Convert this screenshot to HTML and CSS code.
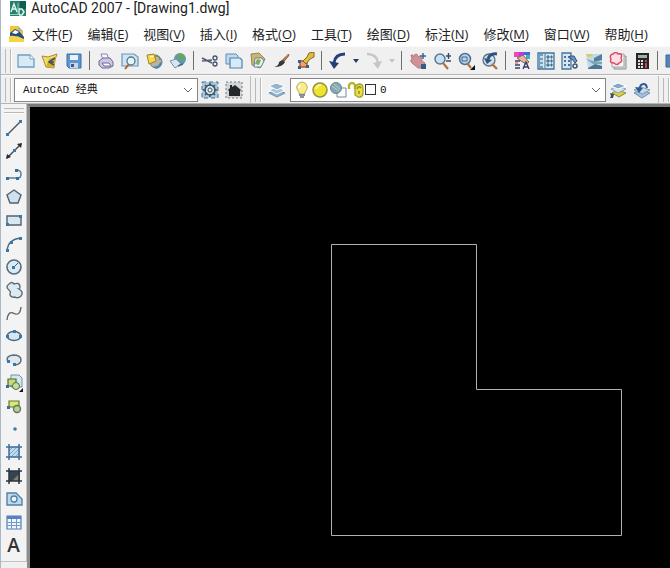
FILE: index.html
```html
<!DOCTYPE html>
<html lang="zh-CN">
<head>
    <meta charset="UTF-8">
    <meta name="viewport" content="width=device-width, initial-scale=1.0">
    <title>AutoCAD 2007 - [Drawing1.dwg]</title>
    <link rel="stylesheet" href="styles.css">
</head>
<body>
    <div class="app">
        <header class="titlebar">
            <svg class="logo" viewBox="0 0 16 16"><path fill="#27806c" d="M0 0h16v15H0z"/><path fill="#0f5f50" d="M10 0h6v8h-6z"/><path fill="none" stroke="#e4f5ef" stroke-width="1.4" d="M1 11L4 3l3 8M2 8h4M9 14V8h3l2 3-2 3H9"/><path stroke="#8bd0bd" d="M0 13.500h8M8 2v12"/></svg>
            <span>AutoCAD 2007 - [Drawing1.dwg]</span>
        </header>

        <nav class="menubar">
            <svg class="doc-icon" viewBox="0 0 18 18"><path fill="#f4c62f" d="M2 1h8l5 5v7H2z"/><path fill="#a9b3bb" d="M10 1v5h5z"/><path fill="#1e4d87" d="M2 11V8l5-4 4 2 5 6v3H2z"/><path fill="#fff" d="M4 8l3-3 4 2-3 2z"/><path fill="#f7d34a" d="M1 11q8-1 15 3v3H1z"/></svg>
            <button class="menu">文件(<u>F</u>)</button>
            <button class="menu">编辑(<u>E</u>)</button>
            <button class="menu">视图(<u>V</u>)</button>
            <button class="menu">插入(<u>I</u>)</button>
            <button class="menu">格式(<u>O</u>)</button>
            <button class="menu">工具(<u>T</u>)</button>
            <button class="menu">绘图(<u>D</u>)</button>
            <button class="menu">标注(<u>N</u>)</button>
            <button class="menu">修改(<u>M</u>)</button>
            <button class="menu">窗口(<u>W</u>)</button>
            <button class="menu">帮助(<u>H</u>)</button>
        </nav>

        <!-- Standard toolbar -->
        <div class="toolbar">
            <span class="grip"></span>
            <button class="tool" aria-label="新建"><svg viewBox="0 0 18 18"><path fill="#d7ebf6" stroke="#6f9fc2" stroke-width="1.300" d="M1 3h12l4 4v8H1z"/><path fill="#fff" stroke="#6f9fc2" d="M13 3v4h4"/></svg></button>
            <button class="tool" aria-label="打开"><svg viewBox="0 0 18 18"><path fill="#f2dc62" stroke="#a98f2d" d="M1 4l6 1 9-3-2 6-1 8-8-1z"/><path fill="#d2ae35" d="M5 15l3-8 7-2-2 11z"/><path fill="none" stroke="#46535c" stroke-width="1.600" d="M14 6l-6 4 5 3M8 10h5"/></svg></button>
            <button class="tool" aria-label="保存"><svg viewBox="0 0 18 18"><path fill="#5d95cf" stroke="#3b6ca5" d="M2 2h14v14H4l-2-2z"/><path fill="#e9f2fa" d="M5 3h8v5H5z"/><path fill="#c9d8e6" d="M5 11h8v5H5z"/><path fill="#355d91" d="M6 12h3v3H6z"/></svg></button>
            <span class="divider"></span>
            <button class="tool" aria-label="打印"><svg viewBox="0 0 18 18"><path fill="#f4f4fb" stroke="#8a86b4" d="M4 2h6l2 6H6z"/><path fill="#cbc9e2" stroke="#6a6795" d="M2 9l4-3h7l3 4v4l-4 2H5l-3-3z"/><path fill="#fff" stroke="#6a6795" d="M5 11h7l2 3H7z"/></svg></button>
            <button class="tool" aria-label="打印预览"><svg viewBox="0 0 18 18"><path fill="#cfe5f4" stroke="#6a96bb" stroke-width="1.200" d="M1 2h12l4 3v9H1z"/><circle cx="10" cy="9" r="4" fill="#e7f4fb" stroke="#55768f" stroke-width="1.300"/><path stroke="#a7622d" stroke-width="2" d="M8 12l-4 5"/></svg></button>
            <button class="tool" aria-label="发布"><svg viewBox="0 0 18 18"><circle cx="11" cy="10" r="6" fill="#b7b49d" stroke="#67747c"/><path fill="#4b87b5" d="M9 14q5 1 6-4l2 1q-1 5-6 6z"/><path fill="#f5d94a" stroke="#a1802e" d="M2 3l7-1 2 7-7 3z"/><path stroke="#fff" d="M5 5l4-1"/><path fill="none" stroke="#577a3d" d="M10 3q5 0 5 5"/></svg></button>
            <button class="tool" aria-label="三维 DWF"><svg viewBox="0 0 18 18"><circle cx="11" cy="7" r="6" fill="#5d9aac"/><path fill="#6aa557" d="M8 2q6-1 8 4l-4 2-3-2z"/><path fill="#d9e4ef" stroke="#7590aa" d="M1 9l6-2 5 5-6 4z"/><path fill="none" stroke="#43698c" stroke-width="1.500" d="M9 14l5-2"/></svg></button>
            <span class="divider"></span>
            <button class="tool" aria-label="剪切"><svg viewBox="0 0 18 18"><path fill="none" stroke="#4e5870" stroke-width="1.500" d="M1 6l10 5M1 9l10-1"/><circle cx="14" cy="6" r="2" fill="none" stroke="#42516e" stroke-width="1.300"/><circle cx="14" cy="12" r="2" fill="none" stroke="#42516e" stroke-width="1.300"/></svg></button>
            <button class="tool" aria-label="复制"><svg viewBox="0 0 18 18"><path fill="#bedaf0" stroke="#608eb7" d="M1 2h10l2 2v8H1z"/><path fill="#d7eaf7" stroke="#4f82af" stroke-width="1.200" d="M5 6h10l2 2v8H5z"/></svg></button>
            <button class="tool" aria-label="粘贴"><svg viewBox="0 0 18 18"><path fill="#cdb56b" stroke="#92865a" d="M2 2l8-1 6 6-5 9-8-3z"/><path fill="#e5f2f5" stroke="#618797" d="M6 6h7l2 3-3 6H5z"/><path fill="#89a95b" d="M6 12l2-5 4 1-2 5z"/></svg></button>
            <button class="tool" aria-label="特性匹配"><svg viewBox="0 0 18 18"><path fill="#8c5a36" d="M9 8l6-6q2 0 1 2l-5 6z"/><path fill="#38383c" d="M1 15q5-1 5-5l3-2 3 2q-2 5-11 5z"/><path stroke="#d4976b" d="M11 8l4-5"/></svg></button>
            <button class="tool" aria-label="块编辑器"><svg viewBox="0 0 18 18"><path fill="#e6a578" stroke="#c1541f" stroke-width="1.400" d="M3 9h7v6H3z"/><path fill="#37628d" d="M1 8h3v3H1zM1 14h3v3H1zM9 13h3v3H9z"/><path fill="#e2bd38" stroke="#80672b" d="M6 9l4-4 2-4 5-1v5l-4 2-4 5z"/></svg></button>
            <span class="divider"></span>
            <button class="tool" aria-label="放弃"><svg viewBox="0 0 18 18"><path fill="none" stroke="#263f79" stroke-width="2.800" d="M16 2Q6 2 5 11"/><path fill="#263f79" d="M0 9l10 2-5 6z"/></svg></button>
            <button class="tool tool-drop" aria-label="放弃列表"><svg viewBox="0 0 8 8"><path fill="#29386c" d="M1 2h6L4 6z"/></svg></button>
            <button class="tool" aria-label="重做"><svg viewBox="0 0 18 18"><path fill="none" stroke="#c4c6c9" stroke-width="2.400" d="M2 2q10 0 11 9"/><path fill="#c4c6c9" d="M8 11l9-2-4 8z"/></svg></button>
            <button class="tool tool-drop" aria-label="重做列表"><svg viewBox="0 0 8 8"><path fill="#c4c6c9" d="M1 2h6L4 6z"/></svg></button>
            <span class="divider"></span>
            <button class="tool" aria-label="实时平移"><svg viewBox="0 0 18 18"><path fill="#cf9195" stroke="#b27f83" d="M2 3q2-1 3 2 0-3 2-3t2 3q1-2 3 0l1 4 3 2q0 4-4 5H9L3 11q-3-3 0-4z"/><path fill="none" stroke="#35648e" stroke-width="1.500" d="M14 1v6M11 4h6"/><path fill="#315d86" d="M12 12h5v5h-5z"/></svg></button>
            <button class="tool" aria-label="实时缩放"><svg viewBox="0 0 18 18"><circle cx="7" cy="7" r="5" fill="#c8e0f1" stroke="#597895" stroke-width="1.500"/><path stroke="#af713d" stroke-width="2.200" d="M10 11l5 6"/><path stroke="#344c6c" stroke-width="1.400" d="M13 4h5M15.500 1v6M13 9h5"/></svg></button>
            <button class="tool" aria-label="窗口缩放"><svg viewBox="0 0 18 18"><circle cx="8" cy="7" r="5.500" fill="#b9d5eb" stroke="#526f91" stroke-width="1.500"/><path fill="none" stroke="#416894" d="M5 5h5v4H5z"/><path stroke="#ae7443" stroke-width="2.200" d="M10 11l4 5"/><path fill="#111" d="M18 13v5h-5z"/></svg></button>
            <button class="tool" aria-label="缩放上一个"><svg viewBox="0 0 18 18"><circle cx="8" cy="8" r="6" fill="#cfdee8" stroke="#5b7185" stroke-width="1.300"/><path stroke="#ae7443" stroke-width="2.400" d="M11 12l5 5"/><path fill="none" stroke="#28527f" stroke-width="3" d="M16 2Q9 1 7 7"/><path fill="#28527f" d="M3 6l8 2-5 4z"/></svg></button>
            <span class="divider"></span>
            <button class="tool" aria-label="特性"><svg viewBox="0 0 18 18"><path fill="#ed48b8" d="M1 0h5v5H1z"/><path fill="#b63ce1" d="M6 0h5v5H6z"/><path fill="#4964de" d="M11 0h6v3h-6z"/><path fill="#3ab3b1" d="M13 3h4v4h-4z"/><path fill="#e8b49c" stroke="#85625d" d="M4 6l6-3 6 7-3 2-5-3z"/><path fill="none" stroke="#324266" stroke-width="1.400" d="M2 9h5M2 13h5M2 16h5M10 17l3-7 3 7M11 15h4"/><path stroke="#d24242" d="M2 11h3"/></svg></button>
            <button class="tool" aria-label="设计中心"><svg viewBox="0 0 18 18"><path fill="#d6e8f3" stroke="#41729d" stroke-width="1.300" d="M1 1h16v16H1z"/><path fill="#6c9fc0" d="M2 2h4v14H2z"/><path stroke="#e9f3f8" stroke-width="1.500" d="M3 5h3M3 9h3M3 13h3"/><path stroke="#4b7590" d="M8 2v14"/><path fill="#b9d58e" stroke="#346384" d="M10 4h2v2h-2zM14 4h1v2h-1zM10 8h2v2h-2zM14 8h1v2h-1zM10 12h2v2h-2zM14 12h1v2h-1z"/></svg></button>
            <button class="tool" aria-label="工具选项板"><svg viewBox="0 0 18 18"><path fill="#d8e6f2" stroke="#47739f" stroke-width="1.300" d="M1 1h9v16H1z"/><path stroke="#47739f" stroke-width="2" d="M3 5h2M3 9h2M3 13h2M7 5h2M7 9h2M7 13h2"/><path fill="#6d94bc" stroke="#2d547f" d="M9 4h4l3 5-2 2-3-4H9z"/><circle cx="14" cy="14" r="2" fill="none" stroke="#3e5570" stroke-width="1.500"/></svg></button>
            <button class="tool" aria-label="图纸集管理器"><svg viewBox="0 0 18 18"><path fill="#c1dae7" d="M1 2h16v15H3z"/><path fill="#557f9f" d="M9 6l8-4v6l-8 2z"/><path fill="#dfc760" d="M1 2h5l2 2-5 1z"/><path fill="#77a8b4" d="M1 7l7 2 9 1v2L8 12z"/><path fill="#4c7991" d="M3 16l7-4 7 2v3H3z"/></svg></button>
            <button class="tool" aria-label="标记集管理器"><svg viewBox="0 0 18 18"><path fill="#d8dadb" stroke="#899198" d="M5 4h12v13H5z"/><path fill="#f3f3f3" stroke="#a4a8ae" d="M3 2h12v13H3z"/><path fill="#fbdfe4" stroke="#de4b68" stroke-width="1.500" d="M4 2q3-3 5 0 5-1 3 4 2 4-2 5-2 3-5 0-5 0-3-4-2-4 2-5z"/></svg></button>
            <button class="tool" aria-label="快速计算器"><svg viewBox="0 0 18 18"><path fill="#292326" d="M3 1h13v16H3z"/><path fill="#99b5a8" d="M5 3h9v3H5z"/><path fill="#e5dddb" d="M5 8h2v2H5zM8 8h2v2H8zM5 11h2v2H5zM8 11h2v2H8zM5 14h2v2H5zM8 14h2v2H8z"/><path fill="#bc4a54" d="M12 8h2v2h-2zM12 11h2v5h-2z"/></svg></button>
            <span class="divider"></span>
            <button class="tool" aria-label="帮助"><svg viewBox="0 0 18 18"><path fill="#5686b8" stroke="#3c6590" d="M1 3h16v12H1z"/></svg></button>
        </div>

        <!-- Workspaces and layers -->
        <div class="toolbar">
            <span class="grip"></span>
            <div class="combo combo-workspace">
                <select class="combo-select" aria-label="工作空间"><option>AutoCAD 经典</option></select>
                <svg class="chevron" viewBox="0 0 10 6"><path d="M1 1l4 4 4-4"/></svg>
            </div>
            <button class="tool" aria-label="工作空间设置"><svg viewBox="0 0 18 18"><path fill="#abc8dc" stroke="#466f91" stroke-dasharray="4 3" d="M1 1h16v16H1z"/><circle cx="9" cy="9" r="5" fill="#d7e0e4" stroke="#3c5569" stroke-width="1.500"/><path stroke="#3c5569" stroke-width="1.600" d="M9 2v3M9 13v3M2 9h3M13 9h3M4 4l2 2M12 12l2 2M14 4l-2 2M6 12l-2 2"/><circle cx="9" cy="9" r="2" fill="#eef4f6" stroke="#3c5569"/></svg></button>
            <button class="tool" aria-label="我的工作空间"><svg viewBox="0 0 18 18"><path fill="#d2d5d8" stroke="#737b80" stroke-dasharray="2 2" d="M1 1h16v16H1z"/><path fill="#24282d" d="M3 9l2-2V4h2v2l3-2 6 5-1 1v5H4v-5z"/></svg></button>
            <span class="toolbar-end"></span>
            <span class="grip"></span>
            <button class="tool tool-layers" aria-label="图层特性管理器"><svg viewBox="0 0 18 18"><path fill="#91b2cc" stroke="#7292ad" d="M1 12l7-3 9 3-8 4z"/><path fill="#aac5da" stroke="#fff" d="M1 9l7-3 9 3-8 4z"/><path fill="#94b5d0" stroke="#fff" d="M1 5l7-3 9 3-8 4z"/></svg></button>
            <div class="combo combo-layer">
                <svg class="layer-icon" viewBox="0 0 18 18"><path fill="#f9ed83" stroke="#b9ad67" d="M6 11Q2 7 5 3q4-4 8 0 3 4-1 8v2H6z"/><path stroke="#59748b" stroke-width="1.400" d="M6 14h6M7 16h4"/><path stroke="#fff" stroke-width="2" d="M7 4l-1 3"/></svg>
                <svg class="layer-icon" viewBox="0 0 18 18"><circle cx="9" cy="9" r="7" fill="#efe42d" stroke="#94923a" stroke-width="1.500"/><path fill="none" stroke="#faf5a1" stroke-width="2" d="M5 8q1-4 5-4"/></svg>
                <svg class="layer-icon" viewBox="0 0 18 18"><path fill="#fff" stroke="#75899c" d="M8 7h9v9H8z"/><circle cx="7" cy="7" r="5.500" fill="#84aaae" stroke="#65859b"/><path stroke="#b9cfd2" d="M3 5l7 5M5 3l6 5"/></svg>
                <svg class="layer-icon" viewBox="0 0 18 18"><path fill="none" stroke="#b5b32c" stroke-width="2.400" d="M2 8V4q1-2 3-2t3 2v4"/><path fill="#e6df45" stroke="#a5a12c" stroke-width="1.300" d="M8 8q0-4 4-5 4 0 4 4v6q-1 4-5 3l-3-2z"/><path fill="none" stroke="#928e2c" stroke-width="1.500" d="M10 8q2-4 4-1M12 10v3"/></svg>
                <span class="swatch"></span>
                <select class="combo-select" aria-label="图层"><option>0</option></select>
                <svg class="chevron" viewBox="0 0 10 6"><path d="M1 1l4 4 4-4"/></svg>
            </div>
            <button class="tool" aria-label="将对象的图层置为当前"><svg viewBox="0 0 18 18"><path fill="#d4d046" stroke="#8e8d36" d="M3 12l6-3 8 3-7 4z"/><path fill="#d9e3ef" stroke="#8aa3b9" d="M2 8l7-3 8 3-8 4z"/><path fill="#84a9c4" stroke="#fff" d="M2 5l7-3 8 3-8 3z"/><path fill="#304e6a" d="M1 12l4 1-1 4H1l1-2z"/></svg></button>
            <button class="tool" aria-label="上一个图层"><svg viewBox="0 0 18 18"><path fill="#a6bed6" stroke="#7593b2" d="M1 12l7-3 9 3-8 5z"/><path fill="#c8d9e8" stroke="#7f9db7" d="M1 9l7-3 9 3-8 4z"/><path fill="none" stroke="#315c91" stroke-width="2" d="M14 7q-1-6-6-3L6 8"/><path fill="#315c91" d="M2 6l8 1-4 5z"/></svg></button>
            <span class="toolbar-end"></span>
            <span class="grip"></span>
        </div>

        <main class="workspace">
            <aside class="sidebar">
                <span class="grip grip-row"></span>
                <button class="draw" aria-label="直线"><svg viewBox="0 0 18 18"><path stroke="#50565c" stroke-width="1.400" d="M3 15L15 3"/><path fill="#377aae" d="M1 14h3v3H1zM14 1h3v3h-3z"/></svg></button>
                <button class="draw" aria-label="构造线"><svg viewBox="0 0 18 18"><path stroke="#45494d" stroke-width="1.500" d="M2 16L16 2"/><path fill="#282a2e" d="M1 17l1-5 4 3zM17 1l-5 1 4 4z"/><path fill="#377aae" d="M8 7h3v3H8z"/></svg></button>
                <button class="draw" aria-label="多段线"><svg viewBox="0 0 18 18"><path fill="none" stroke="#597f9f" stroke-width="1.500" d="M2 13h11q3 0 3-4t-5-4"/><path fill="#31719e" d="M1 12h3v3H1zM11 12h3v3h-3zM10 4h3v3h-3z"/></svg></button>
                <button class="draw" aria-label="正多边形"><svg viewBox="0 0 18 18"><path fill="#cee2ed" stroke="#53616c" stroke-width="1.400" d="M9 2l7 5-3 8H5L2 7z"/></svg></button>
                <button class="draw" aria-label="矩形"><svg viewBox="0 0 18 18"><path fill="#d5e7f1" stroke="#53616c" stroke-width="1.400" d="M2 5h14v9H2z"/><path fill="#347aae" d="M1 12h3v3H1zM14 4h3v3h-3z"/></svg></button>
                <button class="draw" aria-label="圆弧"><svg viewBox="0 0 18 18"><path fill="none" stroke="#53697a" stroke-width="1.400" d="M2 16Q3 4 16 3"/><path fill="#347aae" d="M1 14h3v3H1zM5 6h3v3H5zM14 2h3v3h-3z"/></svg></button>
                <button class="draw" aria-label="圆"><svg viewBox="0 0 18 18"><circle cx="9" cy="9" r="7" fill="#dce9f0" stroke="#536c7e" stroke-width="1.600"/><path stroke="#3e617c" d="M9 9l4-4"/><path fill="#347aae" d="M7 8h3v3H7z"/></svg></button>
                <button class="draw" aria-label="修订云线"><svg viewBox="0 0 18 18"><path fill="#dce9f0" stroke="#5d6d78" stroke-width="1.400" d="M4 9Q0 6 4 3q3-3 5 0 5-2 6 2 0 3-1 3 5 3 2 7-3 3-6 1-4 1-5-2 0-3 1-3-1 0-2-2z"/></svg></button>
                <button class="draw" aria-label="样条曲线"><svg viewBox="0 0 18 18"><path fill="none" stroke="#63686d" stroke-width="1.400" d="M2 16q1-9 6-7 7 4 8-6"/></svg></button>
                <button class="draw" aria-label="椭圆"><svg viewBox="0 0 18 18"><ellipse cx="9" cy="9" rx="7" ry="4.500" fill="#d5e6f0" stroke="#50687a" stroke-width="1.500"/><path fill="#347aae" d="M1 8h3v3H1zM14 8h3v3h-3zM8 3h3v3H8z"/></svg></button>
                <button class="draw" aria-label="椭圆弧"><svg viewBox="0 0 18 18"><path fill="#dfe8ed" stroke="#5d707e" stroke-width="1.500" d="M3 11Q0 5 8 4q8 0 8 5 0 4-6 5"/><path fill="#347aae" d="M2 9h3v3H2zM8 12h3v3H8z"/></svg></button>
                <button class="draw" aria-label="插入块"><svg viewBox="0 0 18 18"><path fill="#d5e7f1" stroke="#6b91aa" d="M6 1h8l3 3v9H6z"/><path fill="#c7db7d" stroke="#4b6a33" stroke-width="1.200" d="M3 5h8v7H3z"/><circle cx="11" cy="12" r="3.500" fill="#c6dca4" stroke="#54713c"/><path fill="#37709b" d="M1 11h3v3H1z"/><path fill="#111" d="M18 14v4h-4z"/></svg></button>
                <button class="draw" aria-label="创建块"><svg viewBox="0 0 18 18"><path fill="#dce578" stroke="#65772f" stroke-width="1.200" d="M4 4h10v6H4z"/><circle cx="12" cy="12" r="3.500" fill="#b9cda4" stroke="#607b45" stroke-width="1.400"/><path fill="#37709b" d="M2 9h3v3H2z"/></svg></button>
                <button class="draw" aria-label="点"><svg viewBox="0 0 18 18"><circle cx="10" cy="9" r="1.800" fill="#397daf"/></svg></button>
                <button class="draw" aria-label="图案填充"><svg viewBox="0 0 18 18"><path fill="#bfdbed" d="M4 4h11v10H4z"/><path stroke="#7ea6c6" d="M4 8l4-4M4 12l8-8M6 14l9-9M10 14l5-5"/><path stroke="#3c6e9c" stroke-width="1.500" d="M4 1v16M14 1v16M1 4h16M1 14h16"/></svg></button>
                <button class="draw" aria-label="渐变色"><svg viewBox="0 0 18 18"><path fill="#344451" d="M4 4h11v10H4z"/><path fill="#7d8078" d="M14 7v7H7z"/><path stroke="#273642" stroke-width="1.500" d="M4 1v16M14 1v16M1 4h16M1 14h16"/></svg></button>
                <button class="draw" aria-label="面域"><svg viewBox="0 0 18 18"><path fill="#bed8ea" stroke="#5281a8" stroke-width="1.400" d="M2 3h9l6 6v6H2z"/><circle cx="9" cy="9" r="3" fill="#eff6fa" stroke="#4f7fa7" stroke-width="1.300"/></svg></button>
                <button class="draw" aria-label="表格"><svg viewBox="0 0 18 18"><path fill="#f1f6fc" stroke="#557fb8" stroke-width="1.200" d="M2 3h14v13H2z"/><path fill="#5582c2" d="M2 3h14v3H2z"/><path stroke="#7198c8" d="M2 9.500h14M2 12.500h14M6.500 6v10M11.500 6v10"/></svg></button>
                <button class="draw draw-text" aria-label="多行文字">A</button>
            </aside>
            <div class="canvas">
                <svg class="drawing"><path d="M301.500 137.500h145v145h145v146h-290z"/></svg>
            </div>
        </main>
    </div>
</body>
</html>
```

FILE: styles.css
```css
* {
    box-sizing: border-box;
}

body {
    margin: 0;
    font-family: "Open Sans", "Noto Sans CJK SC", sans-serif;
    color: #222;
    background-color: #f0f0f0;
}

svg {
    display: block;
    flex: none;
    fill: none;
}

button {
    padding: 0;
    border: none;
    background: none;
    font-family: inherit;
    color: inherit;
}

.app {
    display: flex;
    flex-direction: column;
    height: 100vh;
    border-left: 1px solid #a9b8c6;
    overflow: hidden;
}

.titlebar {
    display: flex;
    align-items: center;
    gap: 5px;
    height: 22px;
    padding: 0 0 5px 9px;
    background-color: #fff;
    font-family: Roboto, sans-serif;
    font-size: 14px;
    line-height: 17px;
    white-space: nowrap;
}

.logo {
    width: 16px;
    height: 16px;
}

.menubar {
    display: flex;
    align-items: center;
    gap: 15px;
    height: 24px;
    padding-left: 7px;
    background-color: #fff;
}

.doc-icon {
    width: 18px;
    height: 18px;
    margin-right: -9px;
}

.menu {
    flex: none;
    font-size: 13px;
    line-height: 20px;
    white-space: nowrap;
}

.menu u {
    text-underline-offset: 2px;
}

.toolbar {
    display: flex;
    flex: none;
    align-items: center;
    height: 29px;
    border-top: 1px solid #fafafa;
    border-bottom: 1px solid #b4b4b4;
    background-color: #f0f0f0;
    overflow: hidden;
}

.grip {
    flex: none;
    width: 6px;
    height: 24px;
    margin: 0 3px 0 4px;
    border: 1px solid #b9b9b9;
    border-width: 0 1px;
    box-shadow: 1px 0 #fff;
}

.grip-row {
    width: 20px;
    height: 5px;
    margin: 4px 0 3px;
    border-width: 1px 0;
    box-shadow: 0 1px #fff;
}

.tool {
    display: flex;
    flex: none;
    align-items: center;
    justify-content: center;
    width: 24px;
    height: 24px;
}

.tool svg,
.draw svg {
    width: 18px;
    height: 18px;
}

.tool-drop {
    width: 12px;
}

.tool-drop svg {
    width: 8px;
    height: 8px;
}

.tool-layers {
    margin: 0 1px;
}

.divider {
    flex: none;
    width: 1px;
    height: 19px;
    margin: 0 4px 0 3px;
    background-color: #6e6e6e;
}

.toolbar-end {
    flex: none;
    width: 3px;
    height: 100%;
    margin-left: 2px;
    border-right: 1px solid #bdbdbd;
}

.combo {
    display: flex;
    align-items: center;
    height: 24px;
    padding-right: 4px;
    border: 1px solid #868686;
    background-color: #fff;
}

.combo-workspace {
    flex: none;
    width: 184px;
    padding-left: 8px;
}

.combo-layer {
    flex: none;
    width: 316px;
    padding-left: 2px;
}

.combo-select {
    flex: 1;
    min-width: 0;
    padding: 0;
    border: none;
    appearance: none;
    background: none;
    font-family: "Liberation Mono", "Noto Sans CJK SC", monospace;
    font-size: 11px;
    line-height: 20px;
    color: #111;
}

.chevron {
    width: 10px;
    height: 6px;
    stroke: #666;
    pointer-events: none;
}

.layer-icon {
    width: 18px;
    height: 18px;
}

.swatch {
    flex: none;
    width: 11px;
    height: 11px;
    margin-right: 4px;
    border: 1px solid #333;
}

.workspace {
    display: flex;
    flex: 1;
    min-height: 0;
}

.sidebar {
    display: flex;
    flex: none;
    flex-direction: column;
    align-items: center;
    width: 26px;
    margin-bottom: 6px;
    padding-bottom: 4px;
    border: 1px solid #c2c2c2;
    border-width: 0 1px 1px 0;
    background-color: #f3f3f3;
}

.draw {
    display: flex;
    flex: 1;
    align-items: center;
    justify-content: center;
    width: 24px;
    min-height: 0;
    max-height: 24px;
}

.draw-text {
    font-size: 19px;
    font-weight: 600;
    line-height: 20px;
    color: #333;
}

.canvas {
    flex: 1;
    min-width: 0;
    border-top: 3px solid #7a7a7a;
    border-left: 3px solid #8c8c8c;
    background-color: #000;
}

.drawing {
    width: 100%;
    height: 100%;
    stroke: #b0b0b0;
}
```
